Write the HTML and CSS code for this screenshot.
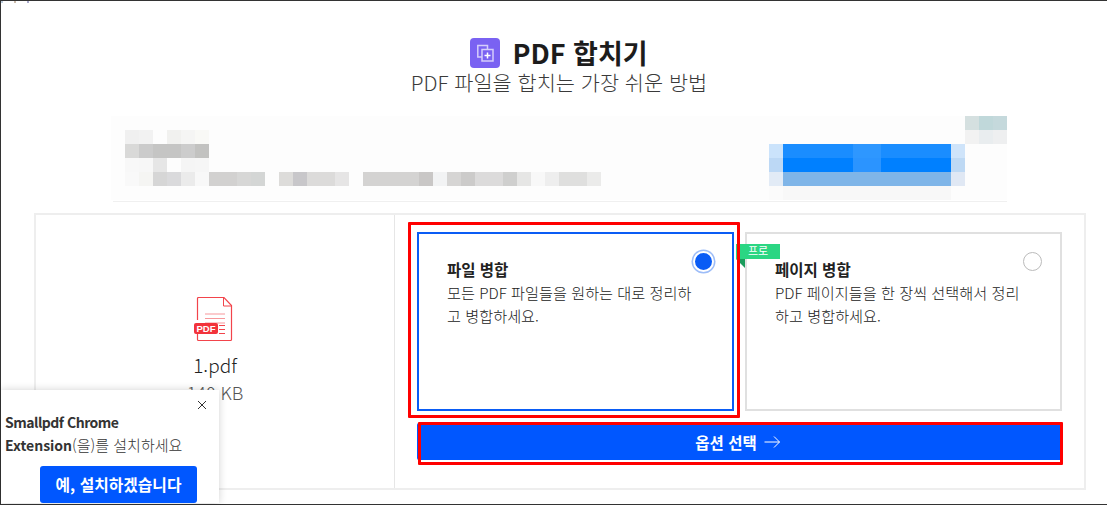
FILE: index.html
```html
<!DOCTYPE html>
<html lang="ko">
<head>
  <meta charset="UTF-8">
  <title>PDF 합치기</title>
  <link rel="stylesheet" href="styles.css">
</head>
<body>

<div class="page">
  <div class="top-specks"><i class="speck s1"></i><i class="speck s2"></i><i class="speck s3"></i></div>

  <header class="head">
    <h1 class="title">
      <span class="title-icon">
        <svg width="30" height="30" viewBox="0 0 30 30" fill="none" stroke="#d5cdfb" stroke-width="1.5">
          <path d="M12 19H7.800V7.500H17.500V11.500"/>
          <rect x="12" y="11.500" width="11" height="11.500"/>
          <path d="M17.500 14.500v6M14.500 17.500h6" stroke="#fff"/>
        </svg>
      </span>
      PDF 합치기
    </h1>
    <p class="subtitle">PDF 파일을 합치는 가장 쉬운 방법</p>
  </header>

  <!-- pixelated ad -->
  <div class="ad">
    <svg width="896" height="86" viewBox="0 0 896 86" shape-rendering="crispEdges">
      <rect width="896" height="84" fill="#fdfdfd"/>
      <g id="row0">
        <rect x="854" y="0" width="14" height="14" fill="#d5e0e0"/>
        <rect x="868" y="0" width="14" height="14" fill="#c0d8da"/>
        <rect x="882" y="0" width="14" height="14" fill="#c5d9dc"/>
      </g>
      <g id="row1">
        <rect x="14" y="14" width="14" height="14" fill="#f0f0f0"/>
        <rect x="28" y="14" width="14" height="14" fill="#f2f2f2"/>
        <rect x="56" y="14" width="14" height="14" fill="#f1f1ef"/>
        <rect x="70" y="14" width="14" height="14" fill="#f5f5f4"/>
        <rect x="84" y="14" width="14" height="14" fill="#f9f9f6"/>
        <rect x="854" y="14" width="14" height="14" fill="#f2f2f2"/>
        <rect x="868" y="14" width="14" height="14" fill="#e9edef"/>
        <rect x="882" y="14" width="14" height="14" fill="#eeeff0"/>
      </g>
      <g id="row2">
        <rect x="14" y="28" width="14" height="14" fill="#d9d9d8"/>
        <rect x="28" y="28" width="14" height="14" fill="#cbcbcb"/>
        <rect x="42" y="28" width="28" height="14" fill="#c5c5c4"/>
        <rect x="70" y="28" width="14" height="14" fill="#cccccc"/>
        <rect x="84" y="28" width="14" height="14" fill="#c2c2c0"/>
        <rect x="658" y="28" width="14" height="14" fill="#cbe3fb"/>
        <rect x="672" y="28" width="168" height="14" fill="#1a8dff"/>
        <rect x="742" y="28" width="28" height="14" fill="#2e97ff"/>
        <rect x="840" y="28" width="14" height="14" fill="#cfe4fa"/>
      </g>
      <g id="row3">
        <rect x="14" y="42" width="14" height="14" fill="#f8f8f8"/>
        <rect x="28" y="42" width="14" height="14" fill="#f7f7f7"/>
        <rect x="42" y="42" width="14" height="14" fill="#e6e6e6"/>
        <rect x="70" y="42" width="14" height="14" fill="#f5f5f5"/>
        <rect x="84" y="42" width="14" height="14" fill="#f6f6f6"/>
        <rect x="658" y="42" width="14" height="14" fill="#bcd8f5"/>
        <rect x="672" y="42" width="168" height="14" fill="#0080ff"/>
        <rect x="742" y="42" width="28" height="14" fill="#2b94ff"/>
        <rect x="840" y="42" width="14" height="14" fill="#bed9f4"/>
      </g>
      <g id="row4">
        <rect x="14" y="56" width="14" height="14" fill="#f9f9f9"/>
        <rect x="28" y="56" width="14" height="14" fill="#f5f5f3"/>
        <rect x="42" y="56" width="14" height="14" fill="#d6d6d6"/>
        <rect x="56" y="56" width="14" height="14" fill="#dadadc"/>
        <rect x="70" y="56" width="14" height="14" fill="#ebebeb"/>
        <rect x="84" y="56" width="14" height="14" fill="#f8f8f8"/>
        <rect x="98" y="56" width="28" height="14" fill="#d2d1d0"/>
        <rect x="126" y="56" width="14" height="14" fill="#d7d7d6"/>
        <rect x="140" y="56" width="14" height="14" fill="#d4d6d5"/>
        <rect x="168" y="56" width="14" height="14" fill="#dddcda"/>
        <rect x="182" y="56" width="14" height="14" fill="#c8c7ca"/>
        <rect x="196" y="56" width="28" height="14" fill="#dcdbda"/>
        <rect x="224" y="56" width="14" height="14" fill="#e6e5e5"/>
        <rect x="252" y="56" width="56" height="14" fill="#d4d3d2"/>
        <rect x="308" y="56" width="14" height="14" fill="#c9c7c6"/>
        <rect x="322" y="56" width="14" height="14" fill="#f2f3f4"/>
        <rect x="336" y="56" width="14" height="14" fill="#d6d5d4"/>
        <rect x="350" y="56" width="14" height="14" fill="#cccbca"/>
        <rect x="364" y="56" width="28" height="14" fill="#dcdbdb"/>
        <rect x="392" y="56" width="14" height="14" fill="#cfcfce"/>
        <rect x="406" y="56" width="14" height="14" fill="#e6e6e5"/>
        <rect x="420" y="56" width="14" height="14" fill="#f8f8f8"/>
        <rect x="434" y="56" width="14" height="14" fill="#eeeeee"/>
        <rect x="448" y="56" width="28" height="14" fill="#dfdfde"/>
        <rect x="476" y="56" width="14" height="14" fill="#ebebea"/>
        <rect x="658" y="56" width="14" height="14" fill="#e2ebf6"/>
        <rect x="672" y="56" width="168" height="14" fill="#7fb5e8"/>
        <rect x="840" y="56" width="14" height="14" fill="#e0e8f4"/>
      </g>
      <g id="row5">
        <rect x="658" y="70" width="14" height="14" fill="#fbfbfb"/>
        <rect x="672" y="70" width="168" height="14" fill="#f8f8f8"/>
      </g>
      <rect x="2" y="85" width="894" height="1" fill="#f0f0f0"/>
    </svg>
  </div>

  <section class="card">
    <div class="file-pane">
      <svg class="file-icon" width="40" height="46" viewBox="0 0 40 46" fill="none">
        <path d="M3.500 24V2.500a1 1 0 0 1 1-1H30l7.500 8V43.500a1 1 0 0 1-1 1H4.500a1 1 0 0 1-1-1V38" stroke="#f2444b" stroke-width="1.200"/>
        <path d="M29.500 1.500v8.500h8" stroke="#f2444b" stroke-width="1"/>
        <path d="M11 18h20M11 22.500h20M11 27h20" stroke="#f7989b" stroke-width="1.200"/>
        <path d="M25 29.500h6M25 33.500h6M25 37.500h6" stroke="#f2444b" stroke-width="1"/>
        <rect x="0" y="27" width="24" height="11" rx="2" fill="#f2333b"/>
        <text x="12" y="36" class="file-icon-text" text-anchor="middle">PDF</text>
      </svg>
      <div class="file-name">1.pdf</div>
      <div class="file-size">140 KB</div>
    </div>

    <div class="options-pane">
      <div class="options">
        <div class="option option-on">
          <span class="radio radio-on"></span>
          <h3>파일 병합</h3>
          <p>모든 PDF 파일들을 원하는 대로 정리하고 병합하세요.</p>
        </div>
        <div class="option">
          <span class="pro-tag">프로</span>
          <span class="radio"></span>
          <h3>페이지 병합</h3>
          <p>PDF 페이지들을 한 장씩 선택해서 정리하고 병합하세요.</p>
        </div>
      </div>
      <button class="next-btn">옵션 선택
        <svg width="17" height="14" viewBox="0 0 17 14" fill="none" stroke="#fff" stroke-width="1"><path d="M0.500 7h15M10 1.500l5.500 5.500-5.500 5.500"/></svg>
      </button>
    </div>
  </section>

  <!-- extension prompt -->
  <aside class="ext-popup">
    <svg class="ext-close" width="10" height="10" viewBox="0 0 10 10" stroke="#333" stroke-width="1"><path d="M1 1l8 8M9 1l-8 8"/></svg>
    <p><b class="ext-name">Smallpdf Chrome</b><br><b>Extension</b>(을)를 설치하세요</p>
    <button class="ext-btn">예, 설치하겠습니다</button>
  </aside>

  <!-- red annotation boxes -->
  <div class="mark mark-option"></div>
  <div class="mark mark-button"></div>
</div>

</body>
</html>
```

FILE: styles.css
```css
* {
  box-sizing: border-box;
}
html, body {
  margin: 0;
  height: 505px;
  overflow: hidden;
  background: #fff;
}
body {
  font-family: "Noto Sans CJK KR", "Noto Sans", sans-serif;
  color: #222;
}
.page {
  position: relative;
  height: 505px;
  border-top: 1px solid #333;
  border-left: 1px solid #333;
  border-bottom: 1px solid #333;
  padding: 37px 23px 0 33px;
}
.top-specks {
  position: absolute;
  top: 0;
  left: 0;
}
.speck {
  position: absolute;
  top: 0;
  width: 2px;
  height: 2px;
}
.s1 { left: 0; background: #bcd; }
.s2 { left: 13px; background: #cba; }
.s3 { left: 26px; background: #aac; }

.head {
  text-align: center;
}
.title {
  display: flex;
  justify-content: center;
  align-items: center;
  gap: 12px;
  margin: 0;
  font-size: 27px;
  line-height: 30px;
  font-weight: 700;
  color: #1c1c1c;
}
.title-icon {
  width: 30px;
  height: 30px;
  border-radius: 4px;
  background: #7a62f2;
  display: block;
}
.title-icon svg {
  display: block;
}
.subtitle {
  margin: 0;
  font-size: 20.800px;
  line-height: 28px;
  font-weight: 300;
  color: #3a3a3a;
}

.ad {
  margin: 20px 0 0 77px;
  height: 97px;
}
.ad svg {
  display: block;
}

.card {
  display: flex;
  width: 1052px;
  height: 277px;
  border: 2px solid #eee;
}
.file-pane {
  width: 359px;
  border-right: 1px solid #e6e6e6;
  display: flex;
  flex-direction: column;
  align-items: center;
  padding-top: 81px;
}
.file-icon {
  display: block;
  margin-right: 2px;
}
.file-icon-text {
  font-family: "Liberation Sans", sans-serif;
  font-size: 9.500px;
  font-weight: 700;
  fill: #fff;
}
.file-name {
  margin-top: 10px;
  font-size: 19px;
  line-height: 26px;
  font-weight: 300;
}
.file-size {
  margin-top: 1px;
  font-size: 18px;
  line-height: 26px;
  font-weight: 300;
  color: #555;
}

.options-pane {
  flex: 1;
  padding: 17px 22px 0;
}
.options {
  display: flex;
  gap: 11px;
}
.option {
  position: relative;
  width: 317px;
  height: 179px;
  border: 2px solid #e0e0e0;
  padding: 24px 35px 0 28px;
}
.option-on {
  border-color: #0a5cf5;
}
.option h3 {
  margin: 0;
  font-size: 15.500px;
  line-height: 23px;
  font-weight: 700;
  color: #222;
}
.option p {
  margin: 0;
  font-size: 15.200px;
  line-height: 23px;
  font-weight: 300;
  color: #222;
}
.radio {
  position: absolute;
  top: 18px;
  right: 18px;
  width: 19px;
  height: 19px;
  border: 1px solid #bbb;
  border-radius: 50%;
  background: #fff;
}
.radio-on {
  top: 17px;
  right: 18px;
  width: 21px;
  height: 21px;
  border: 2px solid #fff;
  background: #0a5cf5;
  box-shadow: 0 0 0 1.500px #9dbdf8;
}
.pro-tag {
  position: absolute;
  top: 10px;
  left: -11px;
  width: 44px;
  height: 15px;
  padding-left: 12px;
  font-size: 11px;
  line-height: 13px;
  color: #fff;
  background: #2bd683;
}
.pro-tag::after {
  content: "";
  position: absolute;
  top: 15px;
  left: 0;
  border-top: 9px solid #1a9c5c;
  border-left: 9px solid transparent;
}
.next-btn {
  display: flex;
  justify-content: center;
  align-items: center;
  gap: 7px;
  width: 645px;
  height: 37px;
  margin-top: 12px;
  padding: 0 3px 0 0;
  border: none;
  border-radius: 2px;
  background: #0057ff;
  color: #fff;
  font-family: inherit;
  font-size: 15.500px;
  font-weight: 700;
}

.ext-popup {
  position: absolute;
  left: 0;
  bottom: 1px;
  width: 218px;
  height: 113px;
  padding: 20px 4px 0;
  background: #fff;
  box-shadow: 0 0 8px rgba(0, 0, 0, .18);
}
.ext-popup p {
  margin: 0;
  font-size: 15px;
  line-height: 23px;
  font-weight: 300;
  color: #333;
}
.ext-popup b {
  font-size: 14px;
  line-height: 18px;
  font-weight: 700;
}
.ext-popup .ext-name {
  letter-spacing: -.5px;
}
.ext-close {
  position: absolute;
  top: 10px;
  right: 12px;
}
.ext-btn {
  display: block;
  width: 157px;
  height: 37px;
  margin: 10px 0 0 35px;
  border: none;
  border-radius: 3px;
  background: #0057ff;
  color: #fff;
  font-family: inherit;
  font-size: 15.800px;
  font-weight: 700;
}

.mark {
  position: absolute;
  border: 3px solid #f00;
  border-radius: 1px;
}
.mark-option {
  left: 407px;
  top: 221px;
  width: 332px;
  height: 196px;
}
.mark-button {
  left: 417px;
  top: 421px;
  width: 645px;
  height: 43px;
}
```
